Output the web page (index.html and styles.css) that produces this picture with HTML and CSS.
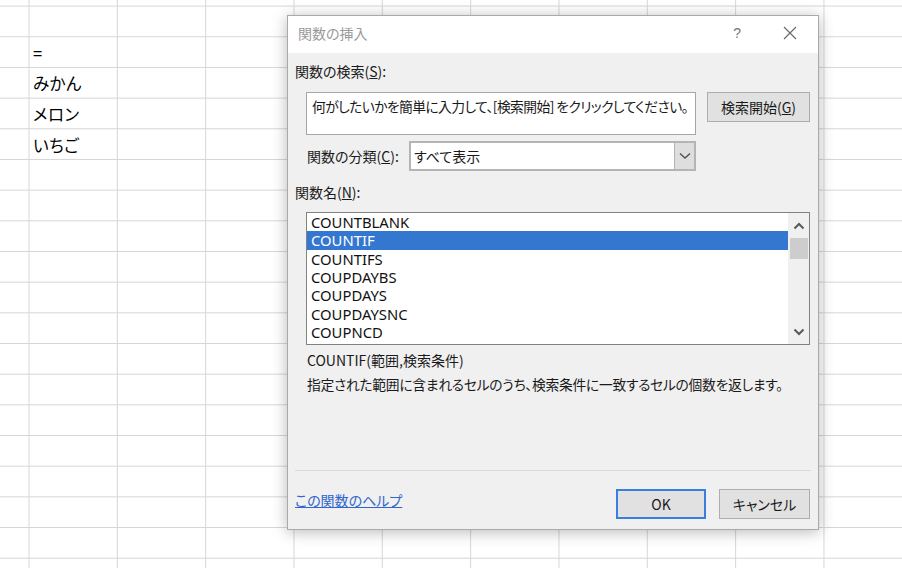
FILE: index.html
```html
<!DOCTYPE html>
<html lang="ja">
<head>
<meta charset="utf-8">
<title>関数の挿入</title>
<link rel="stylesheet" href="styles.css">
</head>
<body>
<div class="sheet">
  <div class="cells">
    <div class="cell">=</div>
    <div class="cell">みかん</div>
    <div class="cell">メロン</div>
    <div class="cell">いちご</div>
  </div>
</div>

<div class="dialog">
  <div class="titlebar">
    <span class="title">関数の挿入</span>
    <span class="tb-help">?</span>
    <svg class="tb-close" width="14" height="14" viewBox="0 0 14 14"><path d="M1 1L13 13M13 1L1 13" stroke="#6a6a6a" stroke-width="1.2" fill="none"/></svg>
  </div>
  <div class="body">
    <div class="label top">関数の検索(<u>S</u>):</div>
    <div class="search-row">
      <div class="textbox">何がしたいかを簡単に入力して、[検索開始] をクリックしてください。</div>
      <div class="btn btn-search">検索開始(<u>G</u>)</div>
    </div>
    <div class="cat-row">
      <span class="cat-label">関数の分類(<u>C</u>):</span>
      <div class="select">
        <span class="select-text">すべて表示</span>
        <span class="select-arrow"><svg width="12" height="8" viewBox="0 0 12 8"><path d="M1 1.5L6 6L11 1.5" stroke="#505050" stroke-width="1.4" fill="none"/></svg></span>
      </div>
    </div>
    <div class="label names">関数名(<u>N</u>):</div>
    <div class="listbox">
      <div class="items">
        <div class="item">COUNTBLANK</div>
        <div class="item sel">COUNTIF</div>
        <div class="item">COUNTIFS</div>
        <div class="item">COUPDAYBS</div>
        <div class="item">COUPDAYS</div>
        <div class="item">COUPDAYSNC</div>
        <div class="item">COUPNCD</div>
      </div>
      <div class="scrollbar">
        <svg class="sb-arrow" width="12" height="8" viewBox="0 0 12 8"><path d="M1.5 6.5L6 2L10.5 6.5" stroke="#5a5a5a" stroke-width="2" fill="none"/></svg>
        <div class="thumb"></div>
        <div class="sb-fill"></div>
        <svg class="sb-arrow" width="12" height="8" viewBox="0 0 12 8"><path d="M1.5 1.5L6 6L10.5 1.5" stroke="#5a5a5a" stroke-width="2" fill="none"/></svg>
      </div>
    </div>
    <div class="syntax">COUNTIF(範囲,検索条件)</div>
    <div class="desc">指定された範囲に含まれるセルのうち、検索条件に一致するセルの個数を返します。</div>
    <div class="spacer"></div>
    <div class="sep"></div>
    <div class="footer">
      <a class="help-link" href="#">この関数のヘルプ</a>
      <div class="btn btn-ok">OK</div>
      <div class="btn btn-cancel">キャンセル</div>
    </div>
  </div>
</div>
</body>
</html>
```

FILE: styles.css
```css
html, body {
  margin: 0;
  padding: 0;
  width: 902px;
  height: 568px;
  overflow: hidden;
  background: #ffffff;
}

body {
  font-family: "Noto Sans CJK JP", sans-serif;
  font-feature-settings: "palt";
  color: #000;
}

.sheet {
  width: 902px;
  height: 568px;
  background-color: #fff;
  background-image:
    linear-gradient(to right, #d6d6d6 1px, transparent 1px),
    linear-gradient(to bottom, #d6d6d6 1px, transparent 1px);
  background-size: 88.33px 100%, 100% 30.68px;
  background-position: 28.5px 0, 0 5.6px;
}

.cells {
  padding-top: 37.5px;
  padding-left: 33px;
}

.cell {
  height: 30.68px;
  line-height: 30.68px;
  font-size: 16.5px;
  letter-spacing: 0.5px;
}

/* Dialog window */
.dialog {
  position: absolute;
  left: 287px;
  top: 15px;
  width: 530px;
  height: 513px;
  border: 1px solid #a9a9a9;
  background: #f0f0f0;
  box-shadow: 0 2px 14px rgba(0, 0, 0, 0.28);
  display: flex;
  flex-direction: column;
  font-size: 14px;
  color: #1a1a1a;
}

.titlebar {
  height: 37px;
  background: #fff;
  display: flex;
  align-items: center;
  padding-left: 10px;
  flex-shrink: 0;
}

.title {
  color: #9a9a9a;
  font-size: 14px;
  flex: 1;
  margin-top: -3px;
}

.tb-help {
  color: #777;
  font-size: 14px;
  font-family: "Liberation Sans", sans-serif;
  margin-right: 42px;
  margin-top: -3px;
}

.tb-close {
  margin-right: 21px;
  margin-top: -3px;
}

.body {
  flex: 1;
  display: flex;
  flex-direction: column;
  padding-left: 7px;
}

.label {
  height: 20px;
  line-height: 20px;
}

.label.top {
  margin-top: 8px;
}

.search-row {
  display: flex;
  align-items: flex-start;
  margin-top: 11px;
  padding-left: 11px;
}

.textbox {
  background: #fff;
  border: 1px solid #a6a6a6;
  padding: 3px 0 0 5px;
  box-sizing: border-box;
  width: 390px;
  height: 43px;
  line-height: 20px;
  font-size: 13.8px;
  letter-spacing: -0.6px;
  white-space: nowrap;
  overflow: hidden;
}

.btn {
  box-sizing: border-box;
  background: #e1e1e1;
  border: 1px solid #adadad;
  display: flex;
  align-items: center;
  justify-content: center;
  height: 30px;
  font-size: 14px;
}

.btn-search {
  margin-left: 11px;
  width: 103px;
}

.cat-row {
  display: flex;
  align-items: center;
  margin-top: 6px;
  padding-left: 12px;
}

.cat-label {
  width: 102px;
}

.select {
  box-sizing: border-box;
  width: 287px;
  height: 30px;
  border: 2px solid #b4b4b4;
  background: #fff;
  display: flex;
  align-items: center;
}

.select-text {
  flex: 1;
  padding-left: 3px;
}

.select-arrow {
  width: 19px;
  height: 26px;
  background: #dedede;
  border-left: 1px solid #b4b4b4;
  display: flex;
  align-items: center;
  justify-content: center;
}

.label.names {
  margin-top: 11px;
}

.listbox {
  box-sizing: border-box;
  margin-top: 10px;
  margin-left: 11px;
  width: 504px;
  height: 133px;
  border: 1px solid #828282;
  background: #fff;
  display: flex;
  padding-top: 0;
}

.items {
  flex: 1;
  font-family: "Noto Sans", "Noto Sans CJK JP", sans-serif;
  font-size: 14.8px;
  color: #111;
}

.item {
  height: 18.33px;
  line-height: 18.33px;
  padding-left: 4px;
}

.item.sel {
  background: #3377d0;
  color: #fff;
}

.scrollbar {
  width: 21px;
  background: #f0f0f0;
  display: flex;
  flex-direction: column;
  align-items: center;
}

.sb-arrow {
  margin-top: 9px;
  margin-bottom: 8px;
  flex-shrink: 0;
}

.thumb {
  width: 18px;
  height: 21px;
  background: #cdcdcd;
}

.sb-fill {
  flex: 1;
}

.syntax {
  margin-top: 5px;
  padding-left: 12px;
  height: 20px;
  line-height: 20px;
}

.desc {
  margin-top: 4px;
  padding-left: 12px;
  height: 20px;
  line-height: 20px;
  font-size: 13.8px;
  letter-spacing: -0.3px;
  white-space: nowrap;
}

.spacer {
  flex: 1;
}

.sep {
  height: 1px;
  background: #d9d9d9;
  margin-right: 7px;
}

.footer {
  display: flex;
  align-items: flex-start;
  height: 58px;
  box-sizing: border-box;
  padding-top: 18px;
}

.help-link {
  color: #2f66cc;
  text-decoration: underline;
  flex: 1;
  line-height: 20px;
  margin-top: 1px;
}

.btn-ok {
  width: 90px;
  border: 2px solid #3a7ee0;
  margin-right: 13px;
}

.btn-cancel {
  width: 91px;
  margin-right: 8px;
}
```
